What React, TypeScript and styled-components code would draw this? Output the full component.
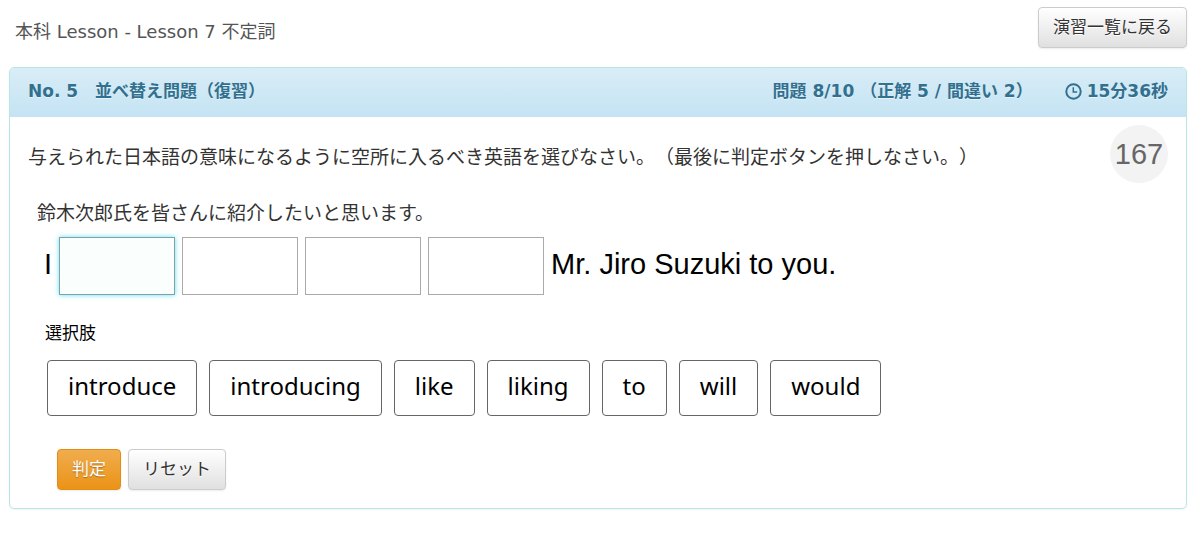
import React, { useState } from "react";
import styled, { createGlobalStyle, css } from "styled-components";

const GlobalStyle = createGlobalStyle`
  *, *::before, *::after { box-sizing: border-box; }
  body {
    margin: 0;
    background: #fff;
    color: #333;
    font-family: "DejaVu Sans", "Noto Sans CJK JP", sans-serif;
    font-size: 17px;
    line-height: 24px;
    text-spacing-trim: space-all;
  }
  button, input { font: inherit; }
`;

const Page = styled.div`
  padding: 7px 12px 24px 9px;
`;

const TopBar = styled.header`
  display: flex;
  justify-content: space-between;
  align-items: center;
  margin-bottom: 19px;
  padding-left: 6px;
`;

const LessonTitle = styled.h1`
  margin: 0;
  padding-top: 8px;
  font-size: 18px;
  font-weight: 400;
  color: #555;
`;

const Button = styled.button<{ $primary?: boolean }>`
  height: 41px;
  padding: 0 14px 1px;
  border: 1px solid #ccc;
  border-radius: 4px;
  background: linear-gradient(#fff, #e0e0e0);
  box-shadow: 0 1px 2px rgba(0, 0, 0, 0.08);
  color: #333;
  text-shadow: 0 1px 0 #fff;
  white-space: nowrap;
  cursor: pointer;
  ${(p) =>
    p.$primary &&
    css`
      border-color: #e38d13;
      background: linear-gradient(#f0ad4e, #eb9316);
      color: #fff;
      text-shadow: 0 1px 1px rgba(0, 0, 0, 0.3);
    `}
`;

const Panel = styled.main`
  border: 1px solid #b8e6e2;
  border-radius: 5px;
  box-shadow: 0 1px 2px rgba(0, 0, 0, 0.05);
`;

const PanelHeader = styled.div`
  display: flex;
  justify-content: space-between;
  align-items: center;
  height: 49px;
  padding: 0 18px 3px;
  border-radius: 4px 4px 0 0;
  background: linear-gradient(#d9edf7, #c4e3f3);
  color: #31708f;
  font-weight: 700;
  text-shadow: 0 1px 0 rgba(255, 255, 255, 0.5);
`;

const PanelTitle = styled.h2`
  margin: 0;
  font-size: 17px;
`;

const Status = styled.div`
  display: flex;
  align-items: center;
  gap: 32px;
`;

const Elapsed = styled.span`
  display: flex;
  align-items: center;
  gap: 5px;
`;

const PanelBody = styled.div`
  padding: 8px 18px 18px;
`;

const Prompt = styled.div`
  display: flex;
  justify-content: space-between;
  align-items: center;
`;

const Sentence = styled.p`
  margin: 0;
  padding-top: 5px;
  font-size: 19px;
  line-height: 28px;
`;

const Translation = styled(Sentence)`
  padding: 16px 9px 0;
`;

const Countdown = styled.div`
  display: grid;
  place-items: center;
  flex: none;
  width: 58px;
  height: 58px;
  border-radius: 50%;
  background: #f3f3f3;
  color: #666;
  font-family: "Liberation Sans", sans-serif;
  font-size: 29px;
`;

const AnswerLine = styled.div`
  display: flex;
  align-items: center;
  gap: 7px;
  margin-top: 10px;
  padding-left: 16px;
  color: #000;
  font-family: "Liberation Sans", sans-serif;
  font-size: 29px;
`;

const Words = styled.span`
  padding-bottom: 4px;
`;

const Blank = styled.input<{ $active?: boolean }>`
  width: 116px;
  height: 58px;
  padding: 0 8px;
  border: 1px solid #aaa;
  border-radius: 0;
  background: #fff;
  text-align: center;
  outline: none;
  ${(p) =>
    p.$active &&
    css`
      border-color: #7fa3a8;
      background: #fafffe;
      box-shadow: 0 0 5px #5fe0f5;
    `}
`;

const ChoicesLabel = styled.h3`
  margin: 26px 0 0;
  padding-left: 17px;
  color: #000;
  font-size: 17px;
  font-weight: 400;
`;

const Choices = styled.div`
  display: flex;
  flex-wrap: wrap;
  gap: 12px;
  margin-top: 15px;
  padding-left: 19px;
`;

const Choice = styled.button`
  height: 56px;
  padding: 0 20px 4px;
  border: 1px solid #666;
  border-radius: 4px;
  background: #fff;
  color: #000;
  font-family: "Noto Sans", sans-serif;
  font-size: 24px;
  cursor: pointer;
`;

const Actions = styled.div`
  display: flex;
  gap: 7px;
  margin-top: 33px;
  padding-left: 29px;
`;

const ClockIcon = () => (
  <svg width="17" height="17" viewBox="0 0 17 17" fill="none" stroke="currentColor" strokeWidth="2" aria-hidden="true">
    <circle cx="8.5" cy="8.5" r="7.2" />
    <path d="M8.3 4.2v4.9h3.9" strokeWidth="1.5" />
  </svg>
);

const blanks = [1, 2, 3, 4];
const choices = ["introduce", "introducing", "like", "liking", "to", "will", "would"];

export default function App() {
  const [answers, setAnswers] = useState<string[]>([]);

  const choose = (word: string) =>
    setAnswers((prev) => (prev.length < blanks.length ? [...prev, word] : prev));

  return (
    <>
      <GlobalStyle />
      <Page>
        <TopBar>
          <LessonTitle>本科 Lesson - Lesson 7 不定詞</LessonTitle>
          <Button type="button">演習一覧に戻る</Button>
        </TopBar>
        <Panel>
          <PanelHeader>
            <PanelTitle>No. 5　並べ替え問題（復習）</PanelTitle>
            <Status>
              <span>問題 8/10 （正解 5 / 間違い 2）</span>
              <Elapsed>
                <ClockIcon />
                15分36秒
              </Elapsed>
            </Status>
          </PanelHeader>
          <PanelBody>
            <Prompt>
              <Sentence>
                与えられた日本語の意味になるように空所に入るべき英語を選びなさい。（最後に判定ボタンを押しなさい。）
              </Sentence>
              <Countdown>167</Countdown>
            </Prompt>
            <Translation>鈴木次郎氏を皆さんに紹介したいと思います。</Translation>
            <AnswerLine>
              <Words>I</Words>
              {blanks.map((n, i) => (
                <Blank
                  key={n}
                  readOnly
                  aria-label={`空所 ${n}`}
                  value={answers[i] ?? ""}
                  $active={i === answers.length}
                />
              ))}
              <Words>Mr. Jiro Suzuki to you.</Words>
            </AnswerLine>
            <ChoicesLabel>選択肢</ChoicesLabel>
            <Choices>
              {choices.map((word) => (
                <Choice key={word} type="button" onClick={() => choose(word)}>
                  {word}
                </Choice>
              ))}
            </Choices>
            <Actions>
              <Button type="button" $primary>
                判定
              </Button>
              <Button type="button" onClick={() => setAnswers([])}>
                リセット
              </Button>
            </Actions>
          </PanelBody>
        </Panel>
      </Page>
    </>
  );
}
